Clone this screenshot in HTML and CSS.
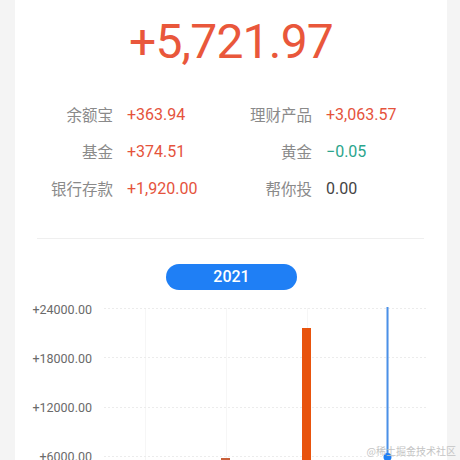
FILE: index.html
```html
<!DOCTYPE html>
<html lang="zh">
<head>
<meta charset="utf-8">
<link rel="stylesheet" href="styles.css">
</head>
<body>
<div class="card">
  <div class="total">+5,721.97</div>
  <div class="grid">
    <span class="label">余额宝</span><span class="val up">+363.94</span>
    <span class="label">理财产品</span><span class="val up">+3,063.57</span>
    <span class="label">基金</span><span class="val up">+374.51</span>
    <span class="label">黄金</span><span class="val down">−0.05</span>
    <span class="label">银行存款</span><span class="val up">+1,920.00</span>
    <span class="label">帮你投</span><span class="val flat">0.00</span>
  </div>
  <div class="divider"></div>
  <div class="year-row"><div class="year">2021</div></div>
  <svg class="chart" width="432" height="190" viewBox="0 0 432 190">
    <g class="vgrid">
      <line x1="130.5" y1="18" x2="130.5" y2="190"/>
      <line x1="211.5" y1="18" x2="211.5" y2="190"/>
      <line x1="292.5" y1="18" x2="292.5" y2="190"/>
      <line x1="373.5" y1="18" x2="373.5" y2="190"/>
    </g>
    <g class="hgrid">
      <line x1="89" y1="18.5" x2="413" y2="18.5"/>
      <line x1="89" y1="67.5" x2="413" y2="67.5"/>
      <line x1="89" y1="117.5" x2="413" y2="117.5"/>
      <line x1="89" y1="166.5" x2="413" y2="166.5"/>
    </g>
    <g class="ylab">
      <text x="77" y="23.5">+24000.00</text>
      <text x="77" y="72.5">+18000.00</text>
      <text x="77" y="122">+12000.00</text>
      <text x="77" y="171">+6000.00</text>
    </g>
    <rect class="bar-small" x="206" y="168" width="9" height="30"/>
    <rect class="bar" x="287" y="38" width="9" height="160"/>
    <rect class="line" x="371.5" y="17" width="2" height="170"/>
    <circle class="dot" cx="372.5" cy="167" r="4"/>
  </svg>
</div>
<div class="watermark">@稀土掘金技术社区</div>
</body>
</html>
```
FILE: styles.css
```css
html, body {
  margin: 0;
  padding: 0;
  background: #f4f4f4;
  height: 460px;
  overflow: hidden;
}
body {
  position: relative;
  font-family: Roboto, "Noto Sans CJK SC", sans-serif;
}
.card {
  margin-left: 15px;
  width: 432px;
  height: 460px;
  background: #ffffff;
  overflow: hidden;
}
.total {
  padding-top: 14px;
  font-size: 48px;
  line-height: 56px;
  text-align: center;
  color: #e9573b;
  letter-spacing: -0.8px;
}
.grid {
  margin-top: 26px;
  margin-left: 22px;
  display: grid;
  grid-template-columns: 76px 91px 80px auto;
  column-gap: 14px;
  font-size: 16px;
  line-height: 37px;
}
.label {
  text-align: right;
  color: #8a8a8a;
  font-family: "Noto Sans CJK SC", sans-serif;
  font-size: 15.5px;
}
.val { white-space: nowrap; }
.up { color: #e5533c; }
.down { color: #2ba58c; }
.flat { color: #444444; }
.divider {
  margin: 31px 23px 0 22px;
  height: 1px;
  background: #efefef;
}
.year-row {
  margin-top: 25px;
  display: flex;
  justify-content: center;
  padding-left: 1px;
}
.year {
  width: 131px;
  height: 26px;
  border-radius: 13px;
  background: #1f7ff5;
  color: #ffffff;
  font-size: 16px;
  font-weight: 500;
  line-height: 26px;
  text-align: center;
}
.chart {
  display: block;
}
.vgrid line {
  stroke: #f6f6f6;
  stroke-width: 1;
}
.hgrid line {
  stroke: #ececec;
  stroke-width: 1;
  stroke-dasharray: 2 2;
}
.ylab text {
  font-family: Roboto, sans-serif;
  font-size: 12.5px;
  fill: #6a6a6a;
  text-anchor: end;
}
.bar-small { fill: #c9603a; }
.bar { fill: #e8530d; }
.line { fill: #4a90e8; }
.dot { fill: #1f7ff5; }
.watermark {
  position: absolute;
  right: 4px;
  top: 443px;
  font-family: "Noto Sans CJK SC", sans-serif;
  font-size: 10px;
  line-height: 16px;
  color: #c4c4c4;
  white-space: nowrap;
}
```
